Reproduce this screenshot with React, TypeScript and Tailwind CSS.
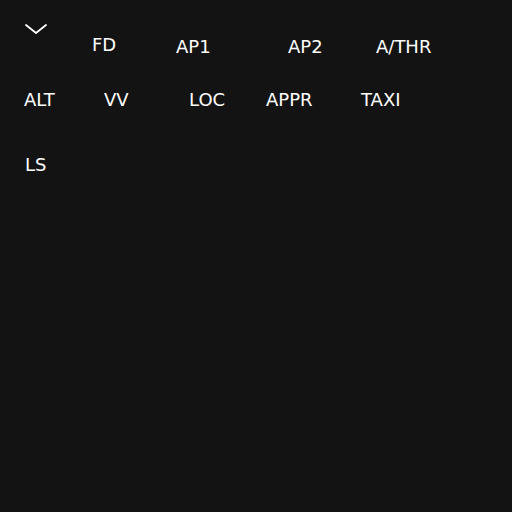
export default function App() {
  return (
    <div
      className="h-[512px] w-[512px] bg-[#131313] text-white text-[18px] leading-[20px]"
      style={{ fontFamily: '"DejaVu Sans", sans-serif' }}
    >
      <div className="flex items-start pt-[24px] pl-[25px]">
        <div className="w-[67px] shrink-0">
          <svg width="22" height="10" viewBox="0 0 22 10" fill="none">
            <path d="M1 1 L11 9 L21 1" stroke="white" strokeWidth="1.8" strokeLinecap="round" strokeLinejoin="round" />
          </svg>
        </div>
        <div className="w-[84px] shrink-0 mt-[11px]">FD</div>
        <div className="w-[112px] shrink-0 mt-[13px]">AP1</div>
        <div className="w-[88px] shrink-0 mt-[13px]">AP2</div>
        <div className="shrink-0 mt-[13px]">A/THR</div>
      </div>
      <div className="flex items-start pl-[24px] mt-[33px]">
        <div className="w-[80px] shrink-0">ALT</div>
        <div className="w-[85px] shrink-0">VV</div>
        <div className="w-[77px] shrink-0">LOC</div>
        <div className="w-[95px] shrink-0">APPR</div>
        <div className="shrink-0">TAXI</div>
      </div>
      <div className="flex pl-[25px] mt-[45px]">
        <div>LS</div>
      </div>
    </div>
  );
}
